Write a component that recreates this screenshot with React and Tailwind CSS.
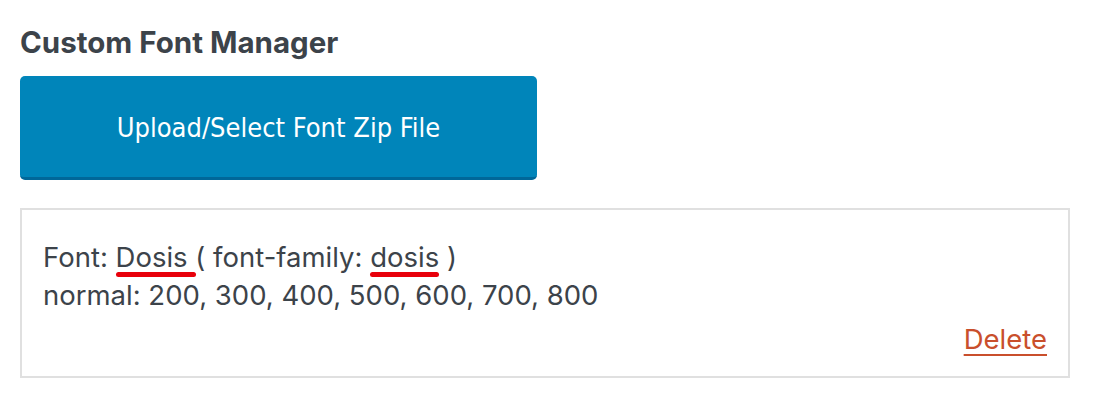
import React from "react";

export default function App() {
    return (
        <div className="w-[1102px] h-[402px] bg-white pl-5 pt-[24px] font-['Inter','Liberation_Sans',sans-serif]">
            {/* Heading */}
            <h2 className="text-[29.5px] leading-[36px] font-bold text-[#3c434a]">Custom Font Manager</h2>

            {/* Upload button */}
            <button className="mt-[16px] w-[517px] h-[104px] rounded-[5px] bg-[#0085ba] border-b-[3px] border-[#006799] pt-[4px] text-white text-[27px] font-['DejaVu_Sans_Condensed','DejaVu_Sans',sans-serif] flex items-center justify-center">
                Upload/Select Font Zip File
            </button>

            {/* Font list box */}
            <div className="mt-7 w-[1050px] h-[170px] border-2 border-[#e0e0e0] px-[21px] pt-[28px] text-[#3c434a] text-[27.5px] leading-[38px] flex flex-col">
                <p>
                    Font:{" "}
                    <span className="relative">
                        Dosis
                        <span className="absolute left-0 right-[-8px] top-[32px] h-[5px] rounded-full bg-[#e8000b]"></span>
                    </span>{" "}
                    ( font-family:{" "}
                    <span className="relative">
                        dosis
                        <span className="absolute left-0 right-0 top-[32px] h-[5px] rounded-full bg-[#e8000b]"></span>
                    </span>{" "}
                    )
                </p>
                <p>normal: 200, 300, 400, 500, 600, 700, 800</p>
                <div className="mt-auto mb-[18px] flex justify-end">
                    <a href="#" className="text-[#c94f2c] underline underline-offset-[5px] decoration-2">Delete</a>
                </div>
            </div>
        </div>
    );
}
